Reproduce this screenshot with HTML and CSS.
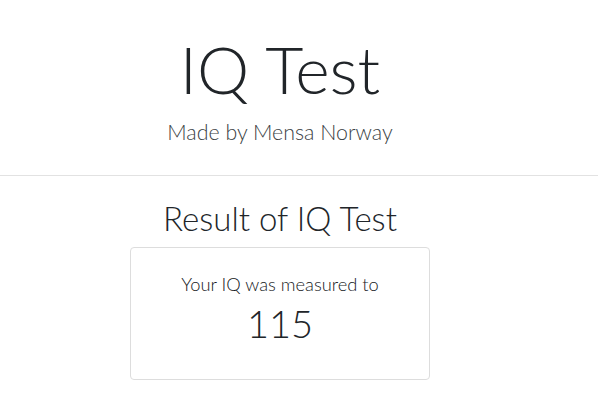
FILE: index.html
```html
<!DOCTYPE html>
<html>
<head>
<meta charset="utf-8">
<link rel="stylesheet" href="styles.css">
</head>
<body>
<header class="header">
  <div class="col">
    <h1 class="title">IQ Test</h1>
    <p class="subtitle">Made by Mensa Norway</p>
  </div>
</header>
<main class="col">
  <h2 class="result-title">Result of IQ Test</h2>
  <div class="card">
    <p class="card-label">Your IQ was measured to</p>
    <p class="card-value">115</p>
  </div>
</main>
</body>
</html>
```
FILE: styles.css
```css
html, body {
  margin: 0;
  padding: 0;
  background: #fff;
  color: #212529;
  font-family: Lato, "Open Sans", sans-serif;
}
.col {
  width: 560px;
  display: flex;
  flex-direction: column;
  align-items: center;
}
.header {
  border-bottom: 1px solid #e2e2e2;
  padding-top: 31px;
  padding-bottom: 30px;
}
.title {
  margin: 0;
  font-weight: 300;
  font-size: 66px;
  line-height: 76px;
}
.subtitle {
  margin: 12px 0 0;
  font-weight: 300;
  font-size: 21.4px;
  line-height: 26px;
  color: #3b3f44;
}
.result-title {
  margin: 23px 0 10px;
  font-weight: 300;
  font-size: 33px;
  line-height: 38px;
}
.card {
  width: 298px;
  border: 1px solid #ddd;
  border-radius: 4px;
  padding: 24px 0 33px;
  display: flex;
  flex-direction: column;
  align-items: center;
}
.card-label {
  margin: 0;
  font-weight: 300;
  font-size: 18.3px;
  line-height: 24px;
  color: #15181b;
}
.card-value {
  margin: 4px 0 0;
  font-weight: 300;
  font-size: 38px;
  line-height: 46px;
}
```
